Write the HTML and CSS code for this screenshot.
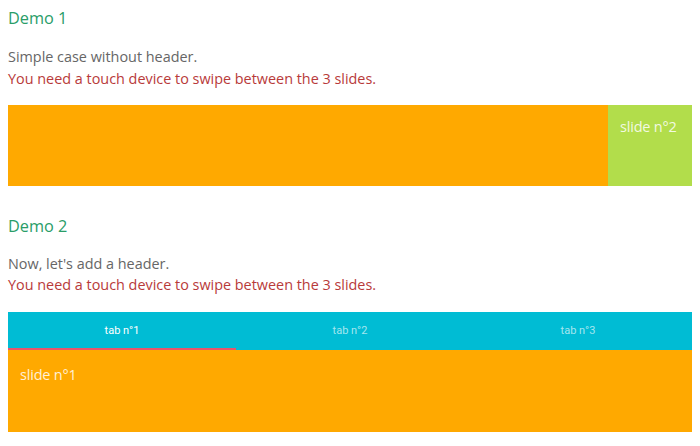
FILE: index.html
```html
<!DOCTYPE html>
<html>
<head>
<meta charset="utf-8">
<link rel="stylesheet" href="styles.css">
</head>
<body>
<section class="demo">
  <h2 class="title">Demo 1</h2>
  <p class="desc">Simple case without header.<br><span class="warn">You need a touch device to swipe between the 3 slides.</span></p>
  <div class="swiper">
    <div class="slide slide-orange slide-first"></div>
    <div class="slide slide-green">slide n°2</div>
  </div>
</section>
<section class="demo demo-two">
  <h2 class="title">Demo 2</h2>
  <p class="desc desc-two">Now, let's add a header.<br><span class="warn">You need a touch device to swipe between the 3 slides.</span></p>
  <div class="tabs">
    <div class="tab tab-active">tab n°1</div>
    <div class="tab">tab n°2</div>
    <div class="tab">tab n°3</div>
    <div class="indicator"></div>
  </div>
  <div class="swiper">
    <div class="slide slide-orange slide-full">slide n°1</div>
  </div>
</section>
</body>
</html>
```

FILE: styles.css
```css
html, body {
  margin: 0;
  padding: 0;
  background: #ffffff;
}
body {
  padding: 0 8px;
  font-family: "Open Sans", "Noto Sans", sans-serif;
}
.title {
  margin: 8px 0 0;
  font-size: 16.3px;
  line-height: 20px;
  font-weight: 400;
  color: #2a9d68;
}
.demo-two .title {
  margin-top: 30px;
}
.desc {
  margin: 18px 0 15px;
  font-size: 14.4px;
  line-height: 22px;
  color: #666666;
}
.desc-two {
  margin: 17px 0 17px;
  line-height: 21px;
}
.warn {
  color: #b83a3a;
}
.swiper {
  display: flex;
  overflow: hidden;
  height: 81px;
}
.demo-two .swiper {
  height: 82px;
}
.slide {
  box-sizing: border-box;
  padding: 13px 12px;
  font-size: 14.5px;
  line-height: 18px;
  color: rgba(255, 255, 255, 0.85);
  flex: 0 0 auto;
  letter-spacing: -0.2px;
}
.slide-orange {
  background: #ffa900;
}
.slide-green {
  background: #b2dd4b;
  width: 100px;
}
.slide-first {
  width: 600px;
}
.slide-full {
  width: 100%;
  padding: 16px 12px;
}
.tabs {
  position: relative;
  display: grid;
  grid-template-columns: repeat(3, 1fr);
  height: 38px;
  background: #00bcd4;
}
.tab {
  display: flex;
  align-items: center;
  justify-content: center;
  padding-bottom: 2px;
  font-family: Roboto, "Liberation Sans", sans-serif;
  font-size: 11px;
  color: rgba(255, 255, 255, 0.65);
}
.tab-active {
  color: #ffffff;
}
.indicator {
  position: absolute;
  left: 0;
  bottom: 0;
  width: 33.333%;
  height: 2px;
  background: #e8556a;
}
```
